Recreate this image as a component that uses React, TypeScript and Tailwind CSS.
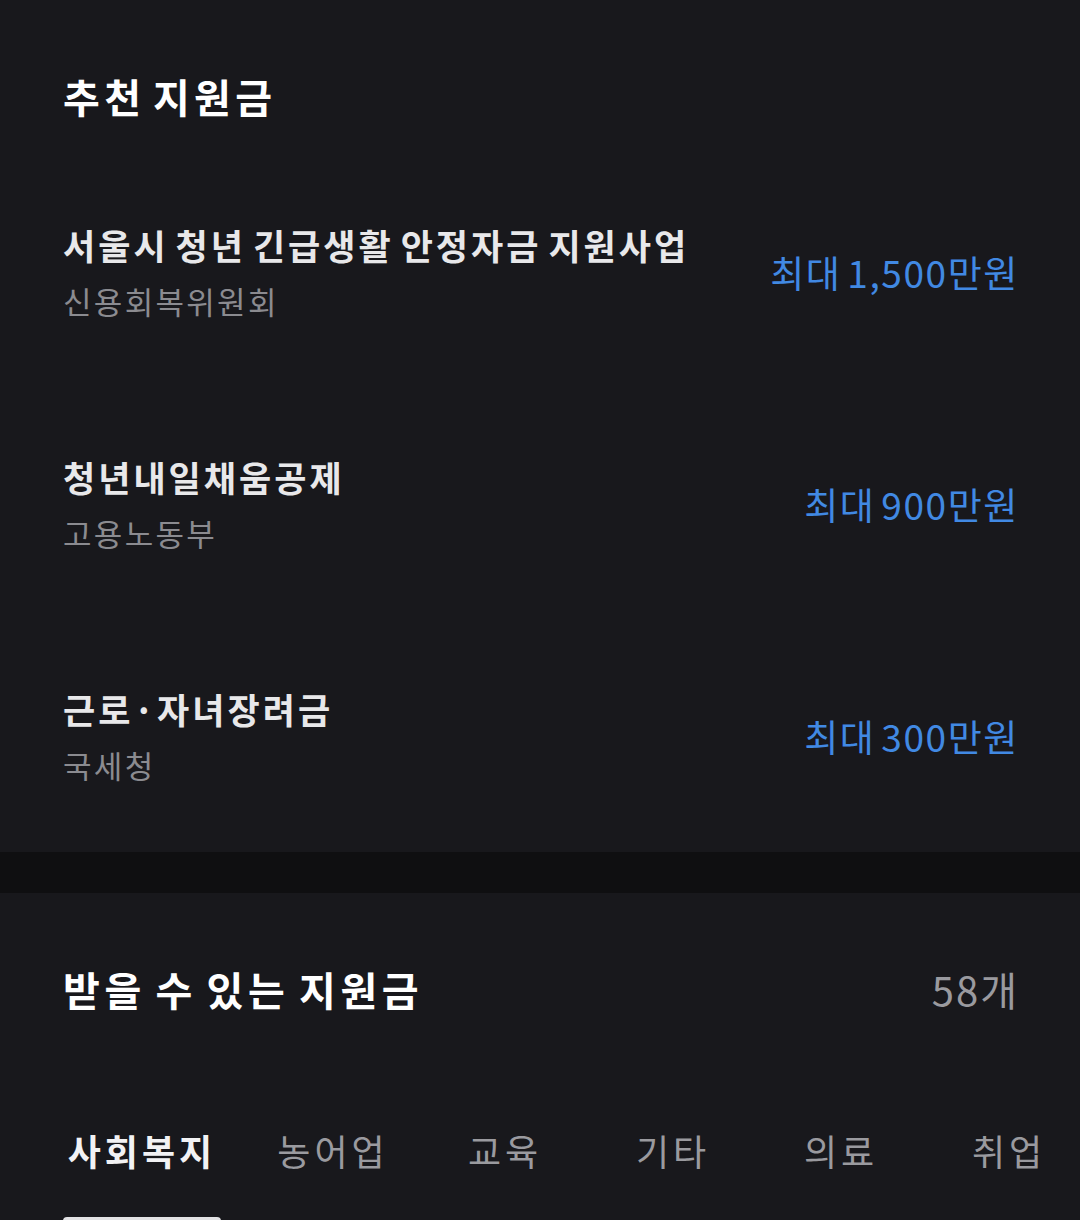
const FONT = "font-['Noto_Sans_CJK_KR','Noto_Sans',sans-serif]";

const RECOMMENDED = [
  { title: "서울시 청년 긴급생활 안정자금 지원사업", org: "신용회복위원회", amount: "최대 1,500만원" },
  { title: "청년내일채움공제", org: "고용노동부", amount: "최대 900만원" },
  { title: "근로·자녀장려금", org: "국세청", amount: "최대 300만원" },
];

const TABS = [
  { label: "사회복지", width: "w-[158px]" },
  { label: "농어업", width: "w-[128px]" },
  { label: "교육", width: "w-[120px]" },
  { label: "기타", width: "w-[120px]" },
  { label: "의료", width: "w-[120px]" },
  { label: "취업", width: "w-[120px]" },
];

export default function App() {
  return (
    <div className={`${FONT} flex h-[1220px] w-[1080px] flex-col overflow-hidden bg-[#18181c]`}>
      {/* 추천 지원금 */}
      <section className="flex flex-col px-[63px]">
        <div className="flex h-[156px] items-start pt-[68px]">
          <h2 className="text-[40px] font-bold leading-[56px] tracking-[4.4px] text-white [word-spacing:-6px]">
            추천 지원금
          </h2>
        </div>
        {RECOMMENDED.map((item) => (
          <div key={item.title} className="flex h-[232px] items-center justify-between">
            <div className="flex flex-col gap-[18px]">
              <span className="text-[35px] font-semibold leading-[40px] tracking-[3px] text-[#e8e8ea] [word-spacing:-4px]">
                {item.title}
              </span>
              <span className="text-[31px] leading-[36px] tracking-[2.3px] text-[#8b8b90]">{item.org}</span>
            </div>
            <span className="-mr-[2px] text-[37px] leading-[44px] tracking-[1.6px] text-[#4189e3] [word-spacing:-4px]">
              {item.amount}
            </span>
          </div>
        ))}
      </section>

      <div className="h-[41px] shrink-0 bg-[#0f0f11]" />

      {/* 받을 수 있는 지원금 */}
      <section className="flex flex-col">
        <div className="flex items-center justify-between px-[63px] pt-[68px]">
          <h2 className="text-[40px] font-bold leading-[56px] tracking-[4.6px] text-white [word-spacing:-4px]">
            받을 수 있는 지원금
          </h2>
          <span className="-mr-[2px] text-[40px] leading-[56px] tracking-[2px] text-[#9a9a9f]">58개</span>
        </div>
        <div className="flex gap-12 pl-[63px] pt-[108px]">
          {TABS.map((tab, i) => (
            <div key={tab.label} className={`${tab.width} flex shrink-0 flex-col items-center gap-[42px]`}>
              <span
                className={
                  i === 0
                    ? "text-[36px] font-bold leading-[50px] tracking-[4px] text-[#f2f2f4]"
                    : "text-[36px] leading-[50px] tracking-[4px] text-[#9a9a9f]"
                }
              >
                {tab.label}
              </span>
              <div className={i === 0 ? "h-[6px] w-full rounded-t-[4px] bg-[#e2e2e4]" : "h-[6px] w-full"} />
            </div>
          ))}
        </div>
      </section>
    </div>
  );
}
